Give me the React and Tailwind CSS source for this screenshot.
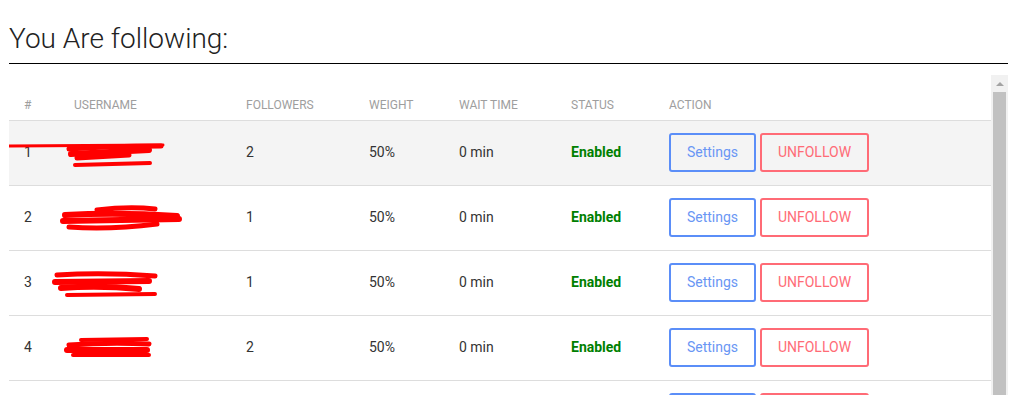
import React from 'react'

// Followed accounts; usernames are redacted with red scribbles in the screenshot
const ROWS = [
  { id: 1, followers: 2, weight: '50%', wait: '0 min', status: 'Enabled' },
  { id: 2, followers: 1, weight: '50%', wait: '0 min', status: 'Enabled' },
  { id: 3, followers: 1, weight: '50%', wait: '0 min', status: 'Enabled' },
  { id: 4, followers: 2, weight: '50%', wait: '0 min', status: 'Enabled' },
  { id: 5, followers: 1, weight: '50%', wait: '0 min', status: 'Enabled' },
]

// Redaction strokes per row, in row-relative coordinates
const SCRIBBLES = {
  1: [
    ['M0 25 L154 24', 3],
    ['M60 28 Q100 25 152 25', 5],
    ['M62 33 L140 29', 6],
    ['M68 37 L120 34', 5],
    ['M66 44 L141 42', 4],
  ],
  2: [
    ['M88 24 Q120 20 146 23', 5],
    ['M56 29 Q110 26 168 30', 6],
    ['M54 35 L170 33', 6],
    ['M60 41 Q100 44 148 38', 5],
  ],
  3: [
    ['M48 24 Q95 21 146 25', 5],
    ['M46 31 L140 30', 6],
    ['M52 37 Q90 34 130 38', 6],
    ['M58 44 L146 43', 4],
  ],
  4: [
    ['M72 24 L138 23', 4],
    ['M60 29 Q100 26 140 28', 5],
    ['M58 34 L138 34', 6],
    ['M64 39 L140 39', 4],
  ],
}

const HEADERS = ['#', 'Username', 'Followers', 'Weight', 'Wait time', 'Status', 'Action']
const COLS = 'grid grid-cols-[50px_172px_123px_90px_112px_98px_1fr]'

function Scribble({ id }) {
  const strokes = SCRIBBLES[id]
  if (!strokes) return null
  return (
    <svg className="absolute left-0 top-0 pointer-events-none" width="200" height="64" viewBox="0 0 200 64">
      {strokes.map(([d, w], i) => (
        <path key={i} d={d} stroke="#ff0000" strokeWidth={w} strokeLinecap="round" fill="none" />
      ))}
    </svg>
  )
}

export default function App() {
  return (
    <div className="h-[395px] overflow-hidden bg-white font-['Roboto',sans-serif]">
      <div className="w-[999px] ml-[9px]">
        {/* Page title */}
        <h1 className="pt-[21px] pb-[6px] text-[28px] leading-[36px] font-light text-[#222] border-b border-black">
          You Are following:
        </h1>

        <div className="flex mt-[11px]">
          {/* Table */}
          <div className="flex-1">
            <div className={`${COLS} border-b border-[#ddd]`}>
              {HEADERS.map(h => (
                <div key={h} className="pl-[15px] pt-[22px] pb-[7px] text-[12px] leading-[16px] uppercase text-[#9e9e9e]">
                  {h}
                </div>
              ))}
            </div>
            {ROWS.map((r, i) => (
              <div key={r.id} className={`${COLS} relative h-[65px] pb-px items-center border-b border-[#ddd] text-[14px] text-[#333] ${i === 0 ? 'bg-[#f4f4f4]' : ''}`}>
                <div className="pl-[15px]">{r.id}</div>
                <div className="pl-[15px]"></div>
                <div className="pl-[15px]">{r.followers}</div>
                <div className="pl-[15px]">{r.weight}</div>
                <div className="pl-[15px]">{r.wait}</div>
                <div className="pl-[15px] font-bold text-[#008000]">{r.status}</div>
                <div className="pl-[15px] flex gap-[4px]">
                  <button className="w-[87px] h-[39px] border-2 border-[#5b8ef8] rounded-[3px] text-[#6996f4] text-[14px]">
                    Settings
                  </button>
                  <button className="w-[109px] h-[39px] border-2 border-[#ff6b76] rounded-[3px] text-[#ff6b76] text-[14px]">
                    UNFOLLOW
                  </button>
                </div>
                <Scribble id={r.id} />
              </div>
            ))}
          </div>

          {/* Scrollbar */}
          <div className="w-[17px] bg-[#f1f1f1] flex flex-col items-center">
            <div className="h-[17px] flex items-center justify-center">
              <div className="w-0 h-0 border-x-[4px] border-x-transparent border-b-[4px] border-b-[#a3a3a3]" />
            </div>
            <div className="w-[13px] h-[400px] bg-[#c1c1c1]" />
          </div>
        </div>
      </div>
    </div>
  )
}
